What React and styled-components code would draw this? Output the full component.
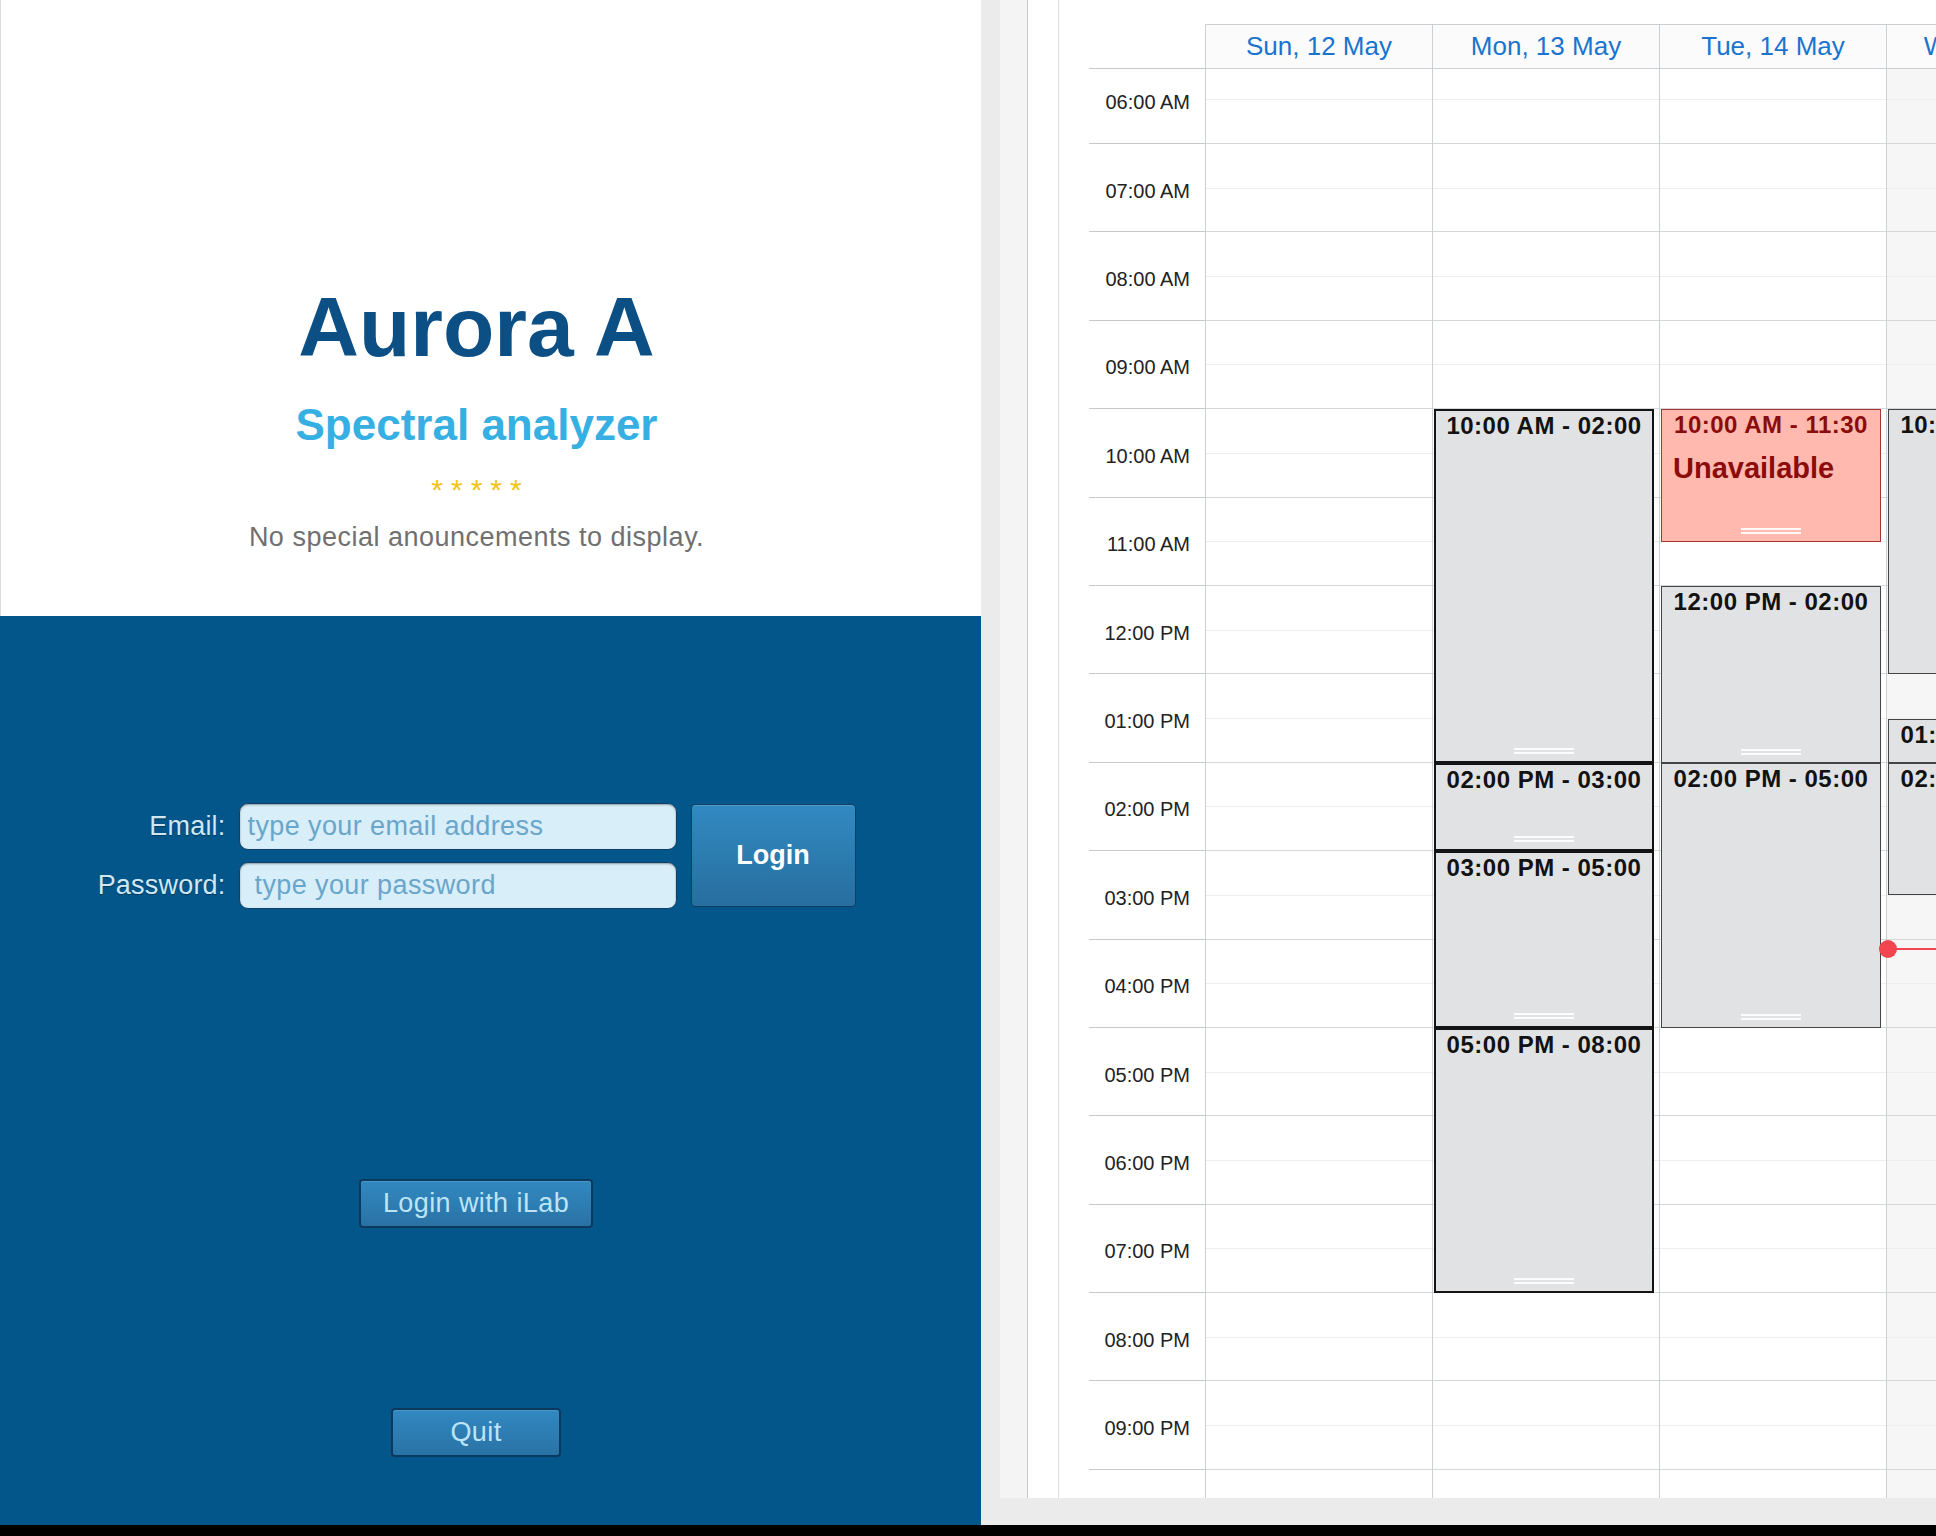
import React from "react";
import styled, { createGlobalStyle } from "styled-components";

const HOUR = 88.4;
const START = 6;
const END = 24;

const GlobalStyle = createGlobalStyle`
  html, body {
    margin: 0;
    padding: 0;
    background: #000;
    overflow: hidden;
  }
  body {
    font-family: "Liberation Sans", Arial, sans-serif;
  }
  * {
    box-sizing: border-box;
  }
`;

const days = [
  { label: "Sun, 12 May", events: [] },
  {
    label: "Mon, 13 May",
    events: [
      { from: 10, to: 14, text: "10:00 AM - 02:00", strong: true },
      { from: 14, to: 15, text: "02:00 PM - 03:00", strong: true },
      { from: 15, to: 17, text: "03:00 PM - 05:00", strong: true },
      { from: 17, to: 20, text: "05:00 PM - 08:00", strong: true },
    ],
  },
  {
    label: "Tue, 14 May",
    events: [
      { from: 10, to: 11.5, text: "10:00 AM - 11:30", note: "Unavailable", busy: true },
      { from: 12, to: 14, text: "12:00 PM - 02:00" },
      { from: 14, to: 17, text: "02:00 PM - 05:00" },
    ],
  },
  {
    label: "Wed, 15 May",
    today: true,
    now: 16.106,
    events: [
      { from: 10, to: 13, text: "10:00 AM - 01:00" },
      { from: 13.5, to: 14, text: "01:30 PM - 02:00" },
      { from: 14, to: 15.5, text: "02:00 PM - 03:30" },
    ],
  },
  { label: "Thu, 16 May", events: [] },
  { label: "Fri, 17 May", events: [] },
  { label: "Sat, 18 May", events: [] },
];

const hours = Array.from({ length: END - START }, (_, i) => START + i);

const formatHour = (h) => {
  const h12 = h % 12 === 0 ? 12 : h % 12;
  return `${String(h12).padStart(2, "0")}:00 ${h < 12 ? "AM" : "PM"}`;
};

const App = () => {
  return (
    <>
      <GlobalStyle />
      <Screen>
        <Main>
          <LeftPanel>
            <Intro>
              <Title>Aurora A</Title>
              <Subtitle>Spectral analyzer</Subtitle>
              <Stars>
                {[0, 1, 2, 3, 4].map((i) => (
                  <span key={i}>*</span>
                ))}
              </Stars>
              <Notice>No special anouncements to display.</Notice>
            </Intro>
            <LoginArea>
              <LoginForm>
                <FieldLabel>Email:</FieldLabel>
                <Field placeholder="type your email address" />
                <LoginButton>Login</LoginButton>
                <FieldLabel>Password:</FieldLabel>
                <Field type="password" placeholder="type your password" $pad={15} />
              </LoginForm>
              <SecondaryButton $width={234} $gap={270}>
                Login with iLab
              </SecondaryButton>
              <SecondaryButton $width={170} $gap={180}>
                Quit
              </SecondaryButton>
            </LoginArea>
          </LeftPanel>

          <RightPane>
            <Card>
              <Sheet>
                <CalFrame>
                  <HeaderRow>
                    <GutterHead />
                    {days.map((d) => (
                      <DayHead key={d.label}>{d.label}</DayHead>
                    ))}
                  </HeaderRow>
                  <Body>
                    <BodyInner>
                      <Gutter>
                        {hours.map((h) => (
                          <TimeCell key={h}>{formatHour(h)}</TimeCell>
                        ))}
                      </Gutter>
                      {days.map((d) => (
                        <DayColumn key={d.label} $today={d.today}>
                          {hours.map((h) => (
                            <HourCell key={h} />
                          ))}
                          {d.events.map((e) => (
                            <Event
                              key={e.text}
                              $top={(e.from - START) * HOUR}
                              $height={(e.to - e.from) * HOUR}
                              $busy={e.busy}
                              $strong={e.strong}
                            >
                              <EventTime>{e.text}</EventTime>
                              {e.note && <EventNote>{e.note}</EventNote>}
                              <Handle />
                            </Event>
                          ))}
                          {d.now && <NowLine $top={(d.now - START) * HOUR} />}
                        </DayColumn>
                      ))}
                    </BodyInner>
                  </Body>
                </CalFrame>
              </Sheet>
            </Card>
          </RightPane>
        </Main>
        <BottomBar />
      </Screen>
    </>
  );
};

export default App;

const Screen = styled.div`
  width: 1936px;
  height: 1536px;
  display: flex;
  flex-direction: column;
  background: #000;
`;
const Main = styled.div`
  height: 1525px;
  display: flex;
`;
const BottomBar = styled.div`
  flex: 1;
  background: #000;
`;

/* left side */
const LeftPanel = styled.section`
  width: 981px;
  flex-shrink: 0;
  display: flex;
  flex-direction: column;
`;
const Intro = styled.header`
  height: 616px;
  background: #fff;
  border-left: 1px solid #dcdcdc;
  padding: 286px 29px 0 0;
  display: flex;
  flex-direction: column;
  align-items: center;
`;
const Title = styled.h1`
  margin: 0;
  font-size: 84px;
  line-height: 82px;
  font-weight: 700;
  color: #0c4f85;
`;
const Subtitle = styled.h2`
  margin: 35px 0 0;
  font-size: 44px;
  line-height: 43px;
  font-weight: 700;
  color: #36afe2;
`;
const Stars = styled.div`
  margin-top: 29px;
  display: flex;
  gap: 8px;
  span {
    font-size: 30px;
    line-height: 30px;
    color: #f3c417;
  }
`;
const Notice = styled.p`
  margin: 19px 0 0;
  font-size: 27px;
  line-height: 27px;
  letter-spacing: 0.5px;
  color: #707070;
`;
const LoginArea = styled.div`
  flex: 1;
  background: #02568a;
  padding: 187px 29px 0 0;
  display: flex;
  flex-direction: column;
  align-items: center;
`;
const LoginForm = styled.div`
  display: grid;
  grid-template-columns: 129px 438px 166px;
  grid-template-rows: 47px 47px;
  column-gap: 13px;
  row-gap: 12px;
  align-items: center;
`;
const FieldLabel = styled.label`
  text-align: right;
  font-size: 27px;
  letter-spacing: 0.2px;
  color: #cfe8f5;
  text-shadow: 0 1px 1px rgba(0, 0, 0, 0.35);
  white-space: nowrap;
`;
const Field = styled.input`
  height: 47px;
  width: 100%;
  border-radius: 9px;
  border: 1px solid #123f68;
  background: #d8eef9;
  box-shadow: inset 0 1px 2px rgba(0, 0, 0, 0.35);
  padding: 0 ${(p) => p.$pad || 8}px;
  font-family: "Liberation Sans", Arial, sans-serif;
  font-size: 27px;
  letter-spacing: 0.4px;
  color: #1c4f78;
  outline: none;
  &::placeholder {
    color: #6aa6ca;
  }
`;
const LoginButton = styled.button`
  grid-column: 3;
  grid-row: 1 / span 2;
  align-self: stretch;
  margin: 1px 0 2px 1px;
  border: 1px solid #113e62;
  border-radius: 4px;
  background: linear-gradient(#318ac2, #276e9e);
  box-shadow: inset 0 1px 0 rgba(255, 255, 255, 0.15);
  color: #fff;
  font-family: "Liberation Sans", Arial, sans-serif;
  font-weight: 700;
  font-size: 27px;
`;
const SecondaryButton = styled.button`
  margin-top: ${(p) => p.$gap}px;
  width: ${(p) => p.$width}px;
  height: 49px;
  border: 2px solid #0c3a5e;
  border-radius: 4px;
  background: linear-gradient(#3189c1, #2a72a5);
  box-shadow: inset 0 1px 0 rgba(255, 255, 255, 0.12);
  color: #bde4f6;
  font-family: "Liberation Sans", Arial, sans-serif;
  font-size: 27px;
  letter-spacing: 0.4px;
`;

/* right side */
const RightPane = styled.section`
  flex: 1;
  min-width: 0;
  background: #ebebeb;
  padding: 0 0 27px 19px;
  display: flex;
`;
const Card = styled.div`
  flex: 1;
  min-width: 0;
  background: #f4f4f4;
  padding-left: 27px;
  display: flex;
`;
const Sheet = styled.div`
  flex: 1;
  min-width: 0;
  background: #fff;
  border-left: 1px solid #c9c9c9;
  padding-left: 30px;
  overflow: hidden;
  display: flex;
`;
const CalFrame = styled.div`
  flex: 1;
  border-left: 1px solid #dedede;
  padding: 24px 0 0 30px;
  display: flex;
  flex-direction: column;
  min-width: 0;
`;
const HeaderRow = styled.div`
  display: flex;
  height: 45px;
  flex-shrink: 0;
`;
const GutterHead = styled.div`
  width: 116px;
  flex-shrink: 0;
  border-bottom: 1px solid #c6cacd;
`;
const DayHead = styled.div`
  width: 227px;
  flex-shrink: 0;
  border: 1px solid #cdd0d2;
  border-right: none;
  background: #fbfbfb;
  display: flex;
  align-items: center;
  justify-content: center;
  font-size: 26px;
  color: #1a74cf;
  white-space: nowrap;
`;
const Body = styled.div`
  flex: 1;
  overflow: hidden;
`;
const BodyInner = styled.div`
  display: flex;
  margin-top: -13.4px;
`;
const Gutter = styled.div`
  width: 116px;
  flex-shrink: 0;
`;
const TimeCell = styled.div`
  height: ${HOUR}px;
  border-bottom: 1px solid #c6cacd;
  display: flex;
  align-items: center;
  justify-content: flex-end;
  padding: 7px 15px 0 0;
  font-size: 20px;
  color: #222;
  white-space: nowrap;
`;
const DayColumn = styled.div`
  position: relative;
  width: 227px;
  flex-shrink: 0;
  border-left: 1px solid #cdd0d2;
  background: ${(p) => (p.$today ? "#f6f6f6" : "#fff")};
`;
const HourCell = styled.div`
  position: relative;
  height: ${HOUR}px;
  border-bottom: 1px solid #d5d8da;
  &::after {
    content: "";
    position: absolute;
    left: 0;
    right: 0;
    top: 50%;
    border-top: 1px solid #eeeeee;
  }
`;
const Event = styled.div`
  position: absolute;
  left: 1px;
  right: 5px;
  top: ${(p) => p.$top}px;
  height: ${(p) => p.$height}px;
  overflow: hidden;
  z-index: 1;
  background: ${(p) => (p.$busy ? "#ffb9ae" : "#e1e2e4")};
  border: ${(p) =>
    p.$busy ? "1px solid #a8342f" : p.$strong ? "2px solid #141414" : "1.5px solid #454545"};
  color: ${(p) => (p.$busy ? "#8c0b0b" : "#121212")};
`;
const EventTime = styled.div`
  padding-top: 1px;
  font-size: 24px;
  line-height: 28px;
  font-weight: 700;
  letter-spacing: 0.5px;
  text-align: center;
  white-space: nowrap;
`;
const EventNote = styled.div`
  margin-top: 13px;
  padding-left: 11px;
  font-size: 29px;
  line-height: 33px;
  font-weight: 700;
  white-space: nowrap;
`;
const Handle = styled.div`
  position: absolute;
  left: 50%;
  bottom: 7px;
  width: 60px;
  height: 6px;
  transform: translateX(-50%);
  border-top: 2px solid rgba(255, 255, 255, 0.9);
  border-bottom: 2px solid rgba(255, 255, 255, 0.9);
`;
const NowLine = styled.div`
  position: absolute;
  left: 0;
  right: 0;
  top: ${(p) => p.$top - 1}px;
  height: 2px;
  background: #f2454d;
  z-index: 2;
  &::before {
    content: "";
    position: absolute;
    left: -8px;
    top: -8px;
    width: 18px;
    height: 18px;
    border-radius: 50%;
    background: #f2454d;
  }
`;
